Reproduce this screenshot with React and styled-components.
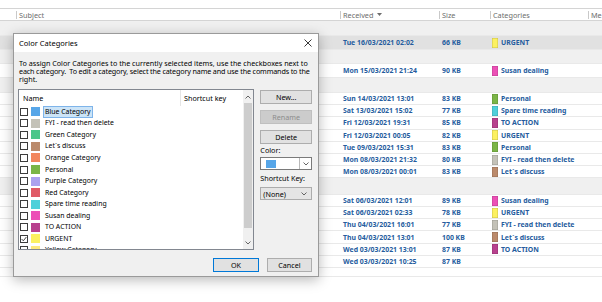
import React from "react";
import styled, { createGlobalStyle } from "styled-components";

const GlobalStyle = createGlobalStyle`
  html, body {
    margin: 0;
    padding: 0;
    background: #ffffff;
  }
  body {
    font-family: "Noto Sans", "Open Sans", sans-serif;
  }
`;

const COLORS = {
  blue: "#57a6e8",
  fyi: "#c4c2b8",
  green: "#4cc68a",
  discuss: "#bb8a6b",
  orange: "#f2865c",
  personal: "#7bb546",
  purple: "#aca2ef",
  red: "#e05a66",
  spare: "#4fd0da",
  susan: "#ec50b6",
  action: "#b8418e",
  urgent: "#fcf160",
  yellow: "#fde97e",
};

const NAMES = {
  urgent: "URGENT",
  susan: "Susan dealing",
  personal: "Personal",
  spare: "Spare time reading",
  action: "TO ACTION",
  fyi: "FYI - read then delete",
  discuss: "Let´s discuss",
};

const mails = [
  { group: true, h: 15 },
  { h: 14, sel: true, date: "Tue 16/03/2021 02:02", size: "66 KB", cat: "urgent" },
  { group: true, h: 14 },
  { h: 14, date: "Mon 15/03/2021 21:24", size: "90 KB", cat: "susan" },
  { group: true, h: 15 },
  { h: 12.2, date: "Sun 14/03/2021 13:01", size: "83 KB", cat: "personal" },
  { h: 12.2, date: "Sat 13/03/2021 15:02", size: "77 KB", cat: "spare" },
  { h: 12.2, date: "Fri 12/03/2021 19:31", size: "85 KB", cat: "action" },
  { h: 12.2, date: "Fri 12/03/2021 00:05", size: "82 KB", cat: "urgent" },
  { h: 12.2, date: "Tue 09/03/2021 15:31", size: "83 KB", cat: "personal" },
  { h: 12.2, date: "Mon 08/03/2021 21:32", size: "80 KB", cat: "fyi" },
  { h: 12.2, date: "Mon 08/03/2021 00:01", size: "83 KB", cat: "discuss" },
  { group: true, h: 16.6 },
  { h: 12.2, date: "Sat 06/03/2021 12:01", size: "89 KB", cat: "susan" },
  { h: 12.2, date: "Sat 06/03/2021 02:33", size: "78 KB", cat: "urgent" },
  { h: 12.2, date: "Thu 04/03/2021 16:01", size: "77 KB", cat: "fyi" },
  { h: 12.2, date: "Thu 04/03/2021 13:01", size: "100 KB", cat: "discuss" },
  { h: 12.2, date: "Wed 03/03/2021 13:01", size: "87 KB", cat: "action" },
  { h: 12.2, date: "Wed 03/03/2021 10:25", size: "87 KB" },
  { h: 9 },
];

const categories = [
  { name: "Blue Category", color: "blue", selected: true },
  { name: "FYI - read then delete", color: "fyi" },
  { name: "Green Category", color: "green" },
  { name: "Let´s discuss", color: "discuss" },
  { name: "Orange Category", color: "orange" },
  { name: "Personal", color: "personal" },
  { name: "Purple Category", color: "purple" },
  { name: "Red Category", color: "red" },
  { name: "Spare time reading", color: "spare" },
  { name: "Susan dealing", color: "susan" },
  { name: "TO ACTION", color: "action" },
  { name: "URGENT", color: "urgent", checked: true },
  { name: "Yellow Category", color: "yellow" },
];

/* ---------- mail list in the background ---------- */

const Page = styled.div`
  position: relative;
  width: 602px;
  height: 302px;
  overflow: hidden;
  background: #fff;
  padding-top: 8px;
  box-sizing: border-box;
`;

const Grid = styled.div`
  display: grid;
  grid-template-columns: 16px 324px 99px 51px 98px 1fr;
  align-items: center;
`;

const HeaderRow = styled(Grid)`
  height: 13px;
  box-sizing: border-box;
  border-top: 1px solid #d4d4d4;
  border-bottom: 1px solid #d4d4d4;
  font-size: 7.3px;
  color: #6d6d6d;
`;

const HeaderCell = styled.div`
  border-left: ${(p) => (p.$bare ? "none" : "1px solid #c9c9c9")};
  height: 8px;
  line-height: 8px;
  padding-left: 2px;
  display: flex;
  align-items: center;
  gap: 4px;
  white-space: nowrap;
`;

const MailRow = styled(Grid)`
  height: ${(p) => p.$h}px;
  box-sizing: border-box;
  border-bottom: 1px solid #e9e9e9;
  background: ${(p) => (p.$group ? "#f0f0f0" : p.$sel ? "#e1e1e1" : "#fff")};
  font-size: 6.9px;
  font-weight: 700;
  color: #255c9e;
  white-space: nowrap;
`;

const Cell = styled.div`
  padding-left: 3px;
  display: flex;
  align-items: center;
`;

const CatCell = styled(Cell)`
  padding-left: 2px;
  gap: 3px;
`;

const CatSwatch = styled.span`
  width: 6px;
  height: 10px;
  background: ${(p) => p.$color};
  box-shadow: inset 0 0 0 0.5px rgba(0, 0, 0, 0.2);
`;

/* ---------- dialog ---------- */

const Dialog = styled.div`
  position: absolute;
  left: 13px;
  top: 33px;
  width: 306px;
  height: 244px;
  box-sizing: border-box;
  border: 1px solid #9a9a9a;
  background: #f0f0f0;
  box-shadow: 0 3px 12px rgba(0, 0, 0, 0.28);
  display: flex;
  flex-direction: column;
  font-size: 7.2px;
  color: #000;
`;

const TitleBar = styled.div`
  height: 18px;
  background: #fff;
  display: flex;
  align-items: center;
  justify-content: space-between;
  padding: 0 6px 0 5px;
  font-size: 7.5px;
`;

const Body = styled.div`
  flex: 1;
  display: flex;
  flex-direction: column;
  padding: 7px 6px 4px 4px;
`;

const Intro = styled.div`
  margin: 0 0 6px 1px;
  font-size: 7.2px;
  line-height: 8px;
  white-space: nowrap;
`;

const IntroLine = styled.div`
  height: 8px;
  letter-spacing: ${(p) => (p.$tight ? "-0.15px" : "0")};
`;

const Main = styled.div`
  display: flex;
  gap: 6px;
`;

const ListBox = styled.div`
  width: 238px;
  height: 161px;
  box-sizing: border-box;
  border: 1px solid #828790;
  background: #fff;
  display: flex;
  overflow: hidden;
`;

const ListContent = styled.div`
  flex: 1;
  overflow: hidden;
`;

const ListHeader = styled.div`
  height: 16px;
  display: grid;
  grid-template-columns: 161px 1fr;
  align-items: center;
`;

const ListHeaderCell = styled.div`
  padding-left: ${(p) => (p.$first ? "4px" : "3px")};
  border-left: ${(p) => (p.$first ? "none" : "1px solid #e5e5e5")};
  height: 16px;
  line-height: 16px;
`;

const Item = styled.div`
  height: 11.55px;
  display: flex;
  align-items: center;
  padding-left: 1px;
  white-space: nowrap;
  font-size: 6.9px;
`;

const Check = styled.span`
  width: 8px;
  height: 8px;
  box-sizing: border-box;
  border: 1px solid #3c3c3c;
  background: #fff;
  display: flex;
  align-items: center;
  justify-content: center;
`;

const Swatch = styled.span`
  width: 9px;
  height: 9px;
  margin-left: 3px;
  background: ${(p) => p.$color};
`;

const Label = styled.span`
  margin-left: 3px;
  padding: 0 1px;
  line-height: 10px;
  border: 1px solid ${(p) => (p.$sel ? "#7eb4ea" : "transparent")};
  background: ${(p) => (p.$sel ? "#cce4f7" : "transparent")};
`;

const ScrollBar = styled.div`
  width: 10px;
  background: #f0f0f0;
  display: flex;
  flex-direction: column;
`;

const ScrollArrow = styled.div`
  height: 13px;
  display: flex;
  align-items: center;
  justify-content: center;
`;

const Track = styled.div`
  flex: 1;
`;

const Thumb = styled.div`
  height: 125px;
  margin: 0 1px;
  background: #cdcdcd;
`;

const Side = styled.div`
  width: 52px;
  display: flex;
  flex-direction: column;
  padding-top: 1px;
`;

const Button = styled.div`
  height: 14px;
  box-sizing: border-box;
  border: 1px solid ${(p) => (p.$default ? "#0078d7" : p.$disabled ? "#bfbfbf" : "#adadad")};
  background: ${(p) => (p.$disabled ? "#cccccc" : "#e1e1e1")};
  color: ${(p) => (p.$disabled ? "#8d8d8d" : "#000")};
  display: flex;
  align-items: center;
  justify-content: center;
  width: ${(p) => p.$w || "auto"};
  margin-bottom: ${(p) => p.$mb || 0};
`;

const FieldLabel = styled.div`
  height: 8px;
  line-height: 8px;
  margin: ${(p) => p.$m};
`;

const ColorPicker = styled.div`
  height: 13px;
  box-sizing: border-box;
  border: 1px solid #7a7a7a;
  background: #fff;
  display: flex;
  align-items: center;
`;

const PickerSwatch = styled.span`
  width: 10px;
  height: 8px;
  margin-left: 5px;
  background: ${COLORS.blue};
`;

const PickerDrop = styled.span`
  margin-left: auto;
  width: 11px;
  height: 100%;
  border-left: 1px solid #b9b9b9;
  display: flex;
  align-items: center;
  justify-content: center;
`;

const Select = styled.div`
  height: 13px;
  box-sizing: border-box;
  border: 1px solid #acacac;
  background: #e5e5e5;
  display: flex;
  align-items: center;
  justify-content: space-between;
  padding: 0 4px 0 2px;
`;

const Footer = styled.div`
  margin-top: auto;
  display: flex;
  justify-content: flex-end;
  gap: 8px;
`;

const Chevron = ({ up, color = "#555" }) => (
  <svg width="6" height="4" viewBox="0 0 6 4">
    <path
      d={up ? "M0.5 3.5 L3 1 L5.5 3.5" : "M0.5 0.5 L3 3 L5.5 0.5"}
      fill="none"
      stroke={color}
      strokeWidth="0.9"
    />
  </svg>
);

const CloseIcon = () => (
  <svg width="8" height="8" viewBox="0 0 8 8">
    <path d="M0.5 0.5 L7.5 7.5 M7.5 0.5 L0.5 7.5" stroke="#222" strokeWidth="0.9" />
  </svg>
);

const Tick = () => (
  <svg width="6" height="6" viewBox="0 0 6 6">
    <path d="M0.6 3 L2.3 4.8 L5.4 1" fill="none" stroke="#333" strokeWidth="0.9" />
  </svg>
);

const SortArrow = () => (
  <svg width="5" height="3" viewBox="0 0 5 3">
    <path d="M0 0 L5 0 L2.5 3 Z" fill="#6d6d6d" />
  </svg>
);

export default function App() {
  return (
    <>
      <GlobalStyle />
      <Page>
        <HeaderRow>
          <HeaderCell $bare />
          <HeaderCell>Subject</HeaderCell>
          <HeaderCell>
            Received <SortArrow />
          </HeaderCell>
          <HeaderCell>Size</HeaderCell>
          <HeaderCell>Categories</HeaderCell>
          <HeaderCell>Me</HeaderCell>
        </HeaderRow>
        {mails.map((m, i) => (
          <MailRow key={i} $h={m.h} $group={m.group} $sel={m.sel}>
            <Cell />
            <Cell />
            <Cell>{m.date}</Cell>
            <Cell>{m.size}</Cell>
            <CatCell>
              {m.cat && (
                <>
                  <CatSwatch $color={COLORS[m.cat]} />
                  {NAMES[m.cat]}
                </>
              )}
            </CatCell>
            <Cell />
          </MailRow>
        ))}

        <Dialog>
          <TitleBar>
            <span>Color Categories</span>
            <CloseIcon />
          </TitleBar>
          <Body>
            <Intro>
              <IntroLine>
                To assign Color Categories to the currently selected items, use the checkboxes next to
              </IntroLine>
              <IntroLine $tight>
                each category.&nbsp; To edit a category, select the category name and use the commands to the
              </IntroLine>
              <IntroLine>right.</IntroLine>
            </Intro>
            <Main>
              <ListBox>
                <ListContent>
                  <ListHeader>
                    <ListHeaderCell $first>Name</ListHeaderCell>
                    <ListHeaderCell>Shortcut key</ListHeaderCell>
                  </ListHeader>
                  {categories.map((c) => (
                    <Item key={c.name}>
                      <Check>{c.checked && <Tick />}</Check>
                      <Swatch $color={COLORS[c.color]} />
                      <Label $sel={c.selected}>{c.name}</Label>
                    </Item>
                  ))}
                </ListContent>
                <ScrollBar>
                  <ScrollArrow>
                    <Chevron up />
                  </ScrollArrow>
                  <Track>
                    <Thumb />
                  </Track>
                  <ScrollArrow>
                    <Chevron />
                  </ScrollArrow>
                </ScrollBar>
              </ListBox>
              <Side>
                <Button $mb="6px">New...</Button>
                <Button $mb="6px" $disabled>
                  Rename
                </Button>
                <Button>Delete</Button>
                <FieldLabel $m="2px 0 3px">Color:</FieldLabel>
                <ColorPicker>
                  <PickerSwatch />
                  <PickerDrop>
                    <Chevron />
                  </PickerDrop>
                </ColorPicker>
                <FieldLabel $m="4px 0 5px">Shortcut Key:</FieldLabel>
                <Select>
                  <span>(None)</span>
                  <Chevron />
                </Select>
              </Side>
            </Main>
            <Footer>
              <Button $default $w="46px">
                OK
              </Button>
              <Button $w="45px">Cancel</Button>
            </Footer>
          </Body>
        </Dialog>
      </Page>
    </>
  );
}
